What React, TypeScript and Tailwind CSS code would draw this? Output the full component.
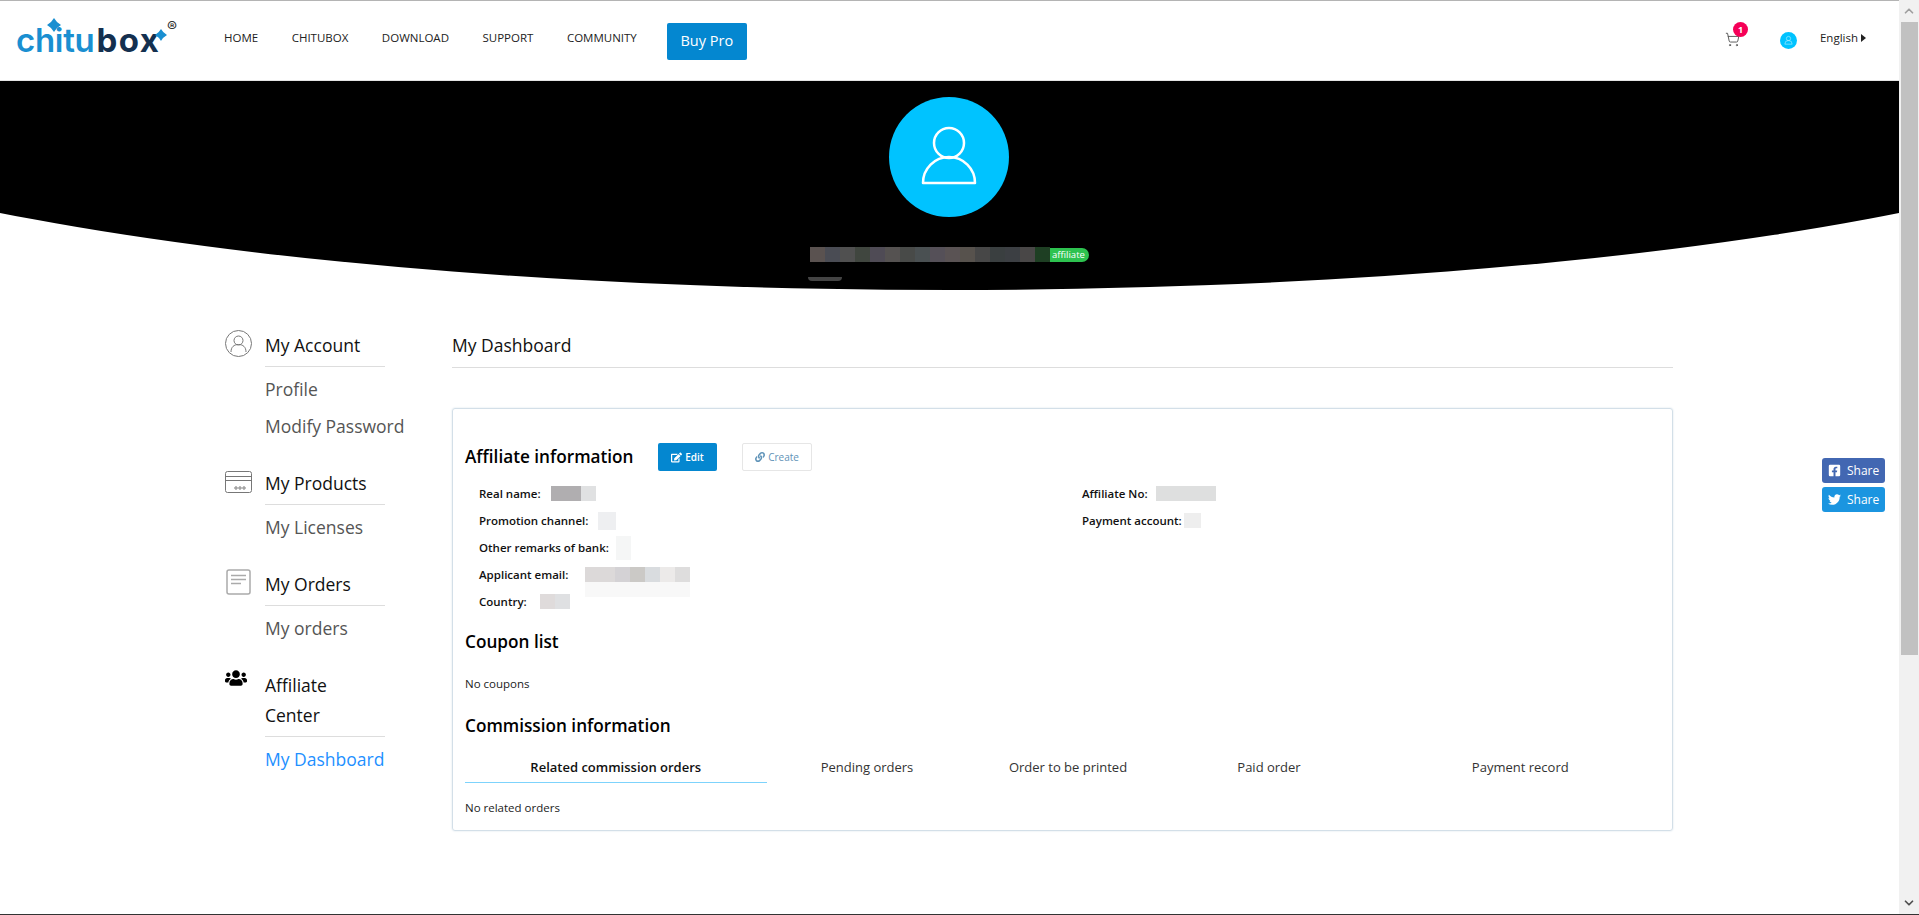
import { ChevronDown, ChevronUp, ShoppingCart } from "lucide-react";
import { FaEdit, FaFacebookSquare, FaLink, FaTwitter, FaUsers } from "react-icons/fa";

const NAV = ["HOME", "CHITUBOX", "DOWNLOAD", "SUPPORT", "COMMUNITY"];

const NAME_BLOCKS = [
  "bg-[#5a5250]",
  "bg-[#4a4c54]",
  "bg-[#505050]",
  "bg-[#40463f]",
  "bg-[#4f4b55]",
  "bg-[#555251]",
  "bg-[#484a48]",
  "bg-[#4a5052]",
  "bg-[#555058]",
  "bg-[#5a5354]",
  "bg-[#57524d]",
  "bg-[#474747]",
  "bg-[#3a3f40]",
  "bg-[#3c3f43]",
  "bg-[#494747]",
  "bg-[#1e3f23]",
];

function UserGlyph({ className, stroke = 2.5 }: { className?: string; stroke?: number }) {
  return (
    <svg viewBox="0 0 120 120" fill="none" stroke="currentColor" strokeWidth={stroke} className={className}>
      <circle cx="60" cy="46" r="15" />
      <path d="M34 86a26 26 0 0 1 52 0z" strokeLinejoin="round" />
    </svg>
  );
}

function Sparkle({ className }: { className?: string }) {
  return (
    <svg viewBox="0 0 14 14" fill="#1a8fd1" className={className}>
      <path d="M7 0Q9.5 4.5 14 7Q9.5 9.5 7 14Q4.5 9.5 0 7Q4.5 4.5 7 0Z" />
    </svg>
  );
}

function Logo() {
  return (
    <div className="relative w-[165px] h-[50px] flex [font-family:'Inter',sans-serif] text-[33px] leading-[50px] whitespace-nowrap">
      <span className="text-[#1a8fd1] font-semibold tracking-[-0.3px]">chitu</span>
      <span className="ml-[2px] text-[#14304f] font-bold tracking-[1.5px]">box</span>
      <Sparkle className="absolute left-[31px] top-[3px] w-[14px] h-[14px]" />
      <Sparkle className="absolute left-[139px] top-[14px] w-[12px] h-[12px]" />
      <span className="absolute left-[151px] top-[4px] text-[15px] leading-[15px] font-normal text-[#333]">®</span>
    </div>
  );
}

function Header() {
  return (
    <header className="h-[81px] border-t border-t-[#b4b4b4] border-b border-b-[#e4e4e4] flex items-center">
      <div className="ml-[16px] w-[208px] mt-[-1px]">
        <Logo />
      </div>
      <nav className="flex items-center gap-[33.5px] text-[11.5px] text-[#222] mt-[-6px]">
        {NAV.map((item) => (
          <a key={item} href="#">
            {item}
          </a>
        ))}
      </nav>
      <a
        href="#"
        className="ml-[30px] w-[80px] h-[37px] mt-[1px] rounded-[2px] bg-[#0487d0] text-white text-[14.5px] flex items-center justify-center"
      >
        Buy Pro
      </a>
      <div className="ml-auto flex items-center mr-[33px]">
        <div className="relative -mt-[2px]">
          <ShoppingCart className="h-[15px] w-[15px] text-[#555]" strokeWidth={1.5} />
          <span className="absolute left-[8px] top-[-10px] w-[15px] h-[15px] rounded-full bg-[#f50057] text-white text-[9px] leading-[15px] font-bold text-center">
            1
          </span>
        </div>
        <div className="ml-[40px] w-[17px] h-[17px] rounded-full bg-[#00c3ff] text-white/50 flex items-center justify-center">
          <UserGlyph className="w-[17px] h-[17px]" stroke={6} />
        </div>
        <span className="ml-[23px] text-[11.5px] text-[#222] mt-[-5px]">English</span>
        <span className="ml-[3px] mt-[-5px] w-0 h-0 border-y-[4px] border-y-transparent border-l-[5px] border-l-[#222]" />
      </div>
    </header>
  );
}

function Hero() {
  return (
    <section className="relative h-[209px] overflow-hidden flex flex-col items-center">
      <div className="absolute left-1/2 -translate-x-1/2 bottom-0 w-[2600px] h-[486px] rounded-[50%] bg-black" />
      <div className="relative mt-[16px] -ml-[2px] w-[120px] h-[120px] rounded-full bg-[#00c3ff] text-white">
        <UserGlyph className="w-[120px] h-[120px]" />
      </div>
      <div className="relative mt-[30px] flex items-center">
        {NAME_BLOCKS.map((c, i) => (
          <span key={i} className={`w-[15px] h-[15px] ${c}`} />
        ))}
        <span className="h-[14px] w-[39px] rounded-r-full bg-[#2dc24f] text-white text-[9.5px] font-medium leading-[14px] pl-[2px]">
          affiliate
        </span>
      </div>
      <span className="absolute left-[808px] top-[196px] w-[34px] h-[4px] rounded-b-full bg-[#444]" />
    </section>
  );
}

function SideGroup({
  icon,
  title,
  items,
  className,
}: {
  icon: React.ReactNode;
  title: React.ReactNode;
  items: { label: string; active?: boolean }[];
  className?: string;
}) {
  return (
    <div className={`flex ${className ?? ""}`}>
      <div className="w-[40px] shrink-0">{icon}</div>
      <div className="w-[120px]">
        <div className="border-b border-[#ddd] pb-[6px] text-[17.5px] leading-[30px] text-[#111]">{title}</div>
        <ul className="mt-[4px]">
          {items.map((it) => (
            <li
              key={it.label}
              className={`text-[17.5px] leading-[37px] whitespace-nowrap ${it.active ? "text-[#1e90ff]" : "text-[#555]"}`}
            >
              {it.label}
            </li>
          ))}
        </ul>
      </div>
    </div>
  );
}

function Sidebar() {
  return (
    <aside className="w-[227px] shrink-0">
      <SideGroup
        title="My Account"
        items={[{ label: "Profile" }, { label: "Modify Password" }]}
        icon={
          <svg viewBox="0 0 27 27" fill="none" stroke="#777" strokeWidth="1" className="w-[27px] h-[27px]">
            <circle cx="13.5" cy="13.5" r="13" />
            <circle cx="13.5" cy="10.5" r="4.5" />
            <path d="M6 22c0-5 3-7.5 7.5-7.5S21 17 21 22" />
          </svg>
        }
      />
      <SideGroup
        className="mt-[23px]"
        title="My Products"
        items={[{ label: "My Licenses" }]}
        icon={
          <svg viewBox="0 0 27 25" fill="none" stroke="#777" strokeWidth="1" className="w-[27px] h-[25px]">
            <rect x="0.5" y="3.5" width="26" height="21" rx="2" />
            <path d="M0.5 8.5h26M0.5 12.5h26" />
            <circle cx="11" cy="20" r="1.2" />
            <circle cx="15" cy="20" r="1.2" />
            <circle cx="19" cy="20" r="1.2" />
          </svg>
        }
      />
      <SideGroup
        className="mt-[23px]"
        title="My Orders"
        items={[{ label: "My orders" }]}
        icon={
          <svg viewBox="0 0 25 26" fill="none" stroke="#aaa" className="w-[25px] h-[26px] ml-[1px]">
            <rect x="1" y="1" width="23" height="24" rx="2" strokeWidth="1.5" />
            <path d="M5 6.5h15M5 10.5h15M5 14.5h10" strokeWidth="1.5" />
          </svg>
        }
      />
      <SideGroup
        className="mt-[23px]"
        title={
          <>
            Affiliate
            <br />
            Center
          </>
        }
        items={[{ label: "My Dashboard", active: true }]}
        icon={<FaUsers className="w-[22px] h-[22px] -mt-[3px] text-black" />}
      />
    </aside>
  );
}

function InfoRow({ label, children }: { label: string; children?: React.ReactNode }) {
  return (
    <div className="h-[27px] flex items-center text-[11.5px] font-semibold text-[#111]">
      <span className="whitespace-nowrap">{label}</span>
      {children}
    </div>
  );
}

function Card() {
  return (
    <div className="mt-[40px] border border-[#d3dfe8] rounded-[3px] shadow-[0_0_2px_#d3dfe8] pt-[34px] px-[12px] pb-[12px]">
      <div className="h-[28px] flex items-center">
        <h2 className="text-[17.2px] font-semibold text-black w-[193px]">Affiliate information</h2>
        <a
          href="#"
          className="w-[59px] h-[28px] rounded-[2px] bg-[#0487d0] text-white text-[10px] font-semibold flex items-center justify-center gap-[3px]"
        >
          <FaEdit className="w-[11px] h-[11px]" />
          Edit
        </a>
        <a
          href="#"
          className="ml-[25px] w-[70px] h-[28px] rounded-[2px] border border-[#e6e6e6] text-[#5f93b8] text-[10px] flex items-center justify-center gap-[3px]"
        >
          <FaLink className="w-[10px] h-[10px]" />
          Create
        </a>
      </div>

      <div className="mt-[9px] pl-[14px] flex">
        <div className="w-[603px]">
          <InfoRow label="Real name:">
            <span className="ml-[10px] w-[30px] h-[15px] bg-[#b0aeb0]" />
            <span className="w-[15px] h-[15px] bg-[#e0e1e2]" />
          </InfoRow>
          <InfoRow label="Promotion channel:">
            <span className="ml-[10px] w-[18px] h-[18px] bg-[#eeeff1]" />
          </InfoRow>
          <InfoRow label="Other remarks of bank:">
            <span className="ml-[7px] w-[15px] h-[24px] bg-[#f5f6f6]" />
          </InfoRow>
          <InfoRow label="Applicant email:">
            <span className="ml-[17px] relative flex">
              <span className="w-[30px] h-[15px] bg-[#dcd9d9]" />
              <span className="w-[15px] h-[15px] bg-[#d4d2d5]" />
              <span className="w-[15px] h-[15px] bg-[#cbc9c6]" />
              <span className="w-[15px] h-[15px] bg-[#d9dcdf]" />
              <span className="w-[15px] h-[15px] bg-[#eceae9]" />
              <span className="w-[15px] h-[15px] bg-[#dedddd]" />
              <span className="absolute left-0 top-[15px] w-[105px] h-[15px] bg-[#f8f8f8]" />
            </span>
          </InfoRow>
          <InfoRow label="Country:">
            <span className="ml-[13px] w-[15px] h-[15px] bg-[#dfdbdb]" />
            <span className="w-[15px] h-[15px] bg-[#dfe0e2]" />
          </InfoRow>
        </div>
        <div>
          <InfoRow label="Affiliate No:">
            <span className="ml-[8px] w-[60px] h-[15px] bg-[#dedfdf]" />
          </InfoRow>
          <InfoRow label="Payment account:">
            <span className="ml-[2px] w-[17px] h-[15px] bg-[#eeeeee]" />
          </InfoRow>
        </div>
      </div>

      <h2 className="mt-[12px] text-[17.2px] leading-[30px] font-semibold text-black">Coupon list</h2>
      <p className="mt-[17px] text-[11.5px] leading-[20px] text-[#222]">No coupons</p>
      <h2 className="mt-[17px] text-[17.2px] leading-[30px] font-semibold text-black">Commission information</h2>

      <div className="mt-[11px] -mr-[11px] grid grid-cols-[3fr_2fr_2fr_2fr_3fr] text-[13px] leading-[30px] text-center text-[#333]">
        <span className="border-b border-[#7dd3fc] font-semibold text-[#111]">Related commission orders</span>
        <span>Pending orders</span>
        <span>Order to be printed</span>
        <span>Paid order</span>
        <span>Payment record</span>
      </div>
      <p className="mt-[15px] text-[11.5px] leading-[20px] text-[#222]">No related orders</p>
    </div>
  );
}

function Scrollbar() {
  return (
    <div className="w-[20px] shrink-0 bg-[#f1f1f1] flex flex-col items-center text-[#a0a0a0]">
      <div className="h-[22px] flex items-center">
        <ChevronUp className="w-[14px] h-[14px]" strokeWidth={3} />
      </div>
      <div className="w-[17px] h-[633px] bg-[#c1c1c1]" />
      <div className="mt-auto h-[22px] flex items-center text-[#505050]">
        <ChevronDown className="w-[14px] h-[14px]" strokeWidth={3} />
      </div>
    </div>
  );
}

export default function App() {
  return (
    <div className="relative h-[915px] overflow-hidden flex bg-white border-b border-[#333] [font-family:'Open_Sans',sans-serif]">
      <div className="flex-1 min-w-0">
        <Header />
        <Hero />
        <main className="pl-[225px] pt-[40px] flex">
          <Sidebar />
          <div className="w-[1221px]">
            <h1 className="border-b border-[#ddd] pb-[7px] text-[17.5px] leading-[30px] text-[#111]">My Dashboard</h1>
            <Card />
          </div>
        </main>
      </div>
      <Scrollbar />
      <div className="absolute left-[1822px] top-[458px] flex flex-col gap-[4px] text-white text-[12px]">
        <a href="#" className="w-[63px] h-[25px] rounded-[3px] bg-[#4267b2] flex items-center gap-[6px] pl-[6px]">
          <FaFacebookSquare className="w-[13px] h-[13px]" />
          Share
        </a>
        <a href="#" className="w-[63px] h-[25px] rounded-[3px] bg-[#1b95e0] flex items-center gap-[6px] pl-[6px]">
          <FaTwitter className="w-[13px] h-[13px]" />
          Share
        </a>
      </div>
    </div>
  );
}
